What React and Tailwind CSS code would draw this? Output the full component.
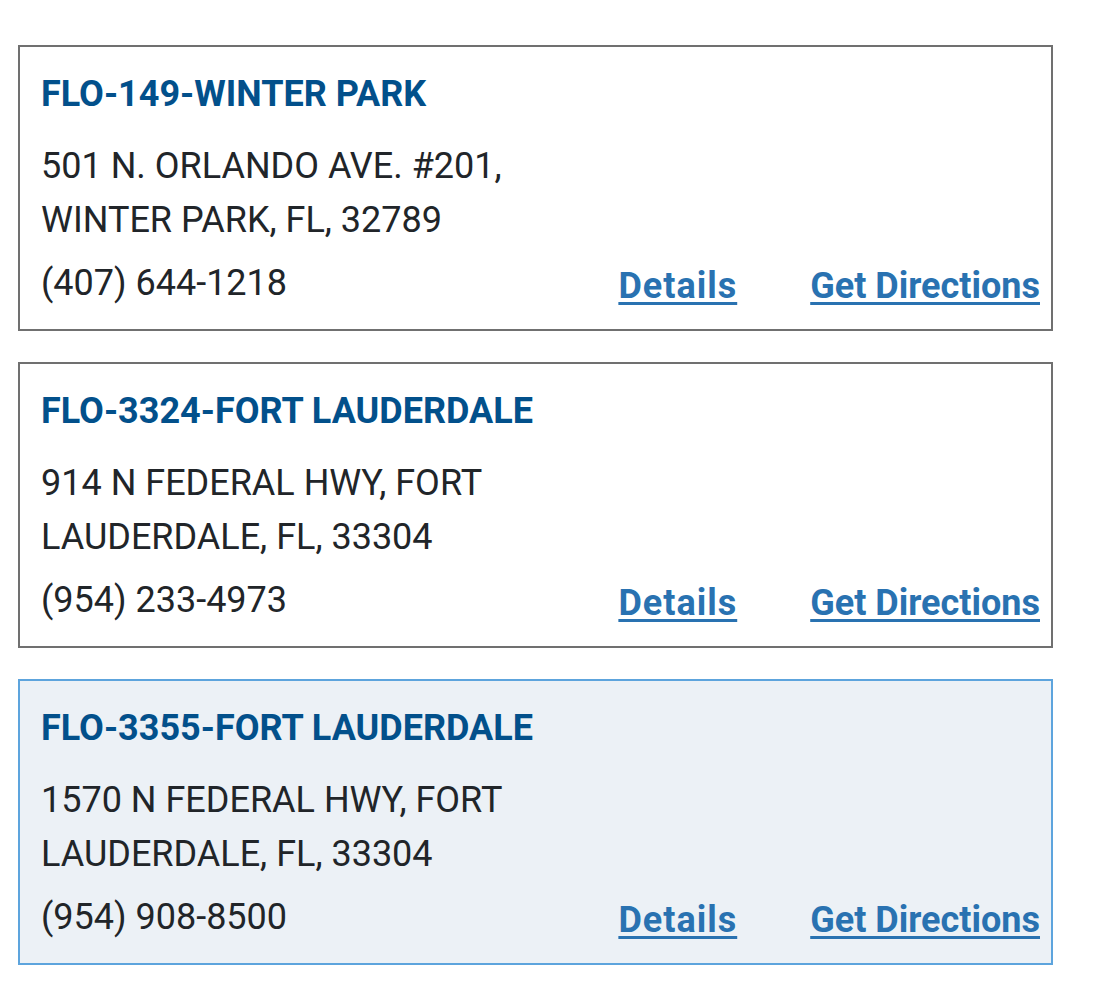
import React from "react";

const stores = [
  { name: "FLO-149-WINTER PARK", a1: "501 N. ORLANDO AVE. #201,", a2: "WINTER PARK, FL, 32789", phone: "(407) 644-1218", active: false },
  { name: "FLO-3324-FORT LAUDERDALE", a1: "914 N FEDERAL HWY, FORT", a2: "LAUDERDALE, FL, 33304", phone: "(954) 233-4973", active: false },
  { name: "FLO-3355-FORT LAUDERDALE", a1: "1570 N FEDERAL HWY, FORT", a2: "LAUDERDALE, FL, 33304", phone: "(954) 908-8500", active: true },
];

export default function App() {
  return (
    <div className="w-[1098px] h-[996px] bg-white pt-[45px] pl-[18px]" style={{ fontFamily: "Roboto, 'Liberation Sans', sans-serif" }}>
      <div className="flex flex-col gap-[31px] w-[1035px]">
        {stores.map((s) => (
          <div
            key={s.name}
            className={
              "h-[286px] border-2 pl-[21px] pr-[11px] pt-[20px] flex flex-col " +
              (s.active ? "border-[#5da4dd] bg-[#ecf1f6]" : "border-[#707070] bg-white")
            }
          >
            <div className="text-[36px] font-bold leading-[54px] text-[#02508b]">{s.name}</div>
            <div className="mt-[18px] text-[36px] leading-[54px] text-[#212529]">
              <div>{s.a1}</div>
              <div>{s.a2}</div>
            </div>
            <div className="flex items-start justify-between mt-[9px]">
              <div className="text-[36px] leading-[54px] text-[#212529]">{s.phone}</div>
              <div className="flex gap-[73px] mt-[3px]">
                <a href="#" className="text-[36px] font-bold leading-[54px] tracking-[1px] text-[#2972b1] underline underline-offset-[4px] decoration-[3px]">Details</a>
                <a href="#" className="text-[36px] font-bold leading-[54px] text-[#2972b1] underline underline-offset-[4px] decoration-[3px]">Get Directions</a>
              </div>
            </div>
          </div>
        ))}
      </div>
    </div>
  );
}
